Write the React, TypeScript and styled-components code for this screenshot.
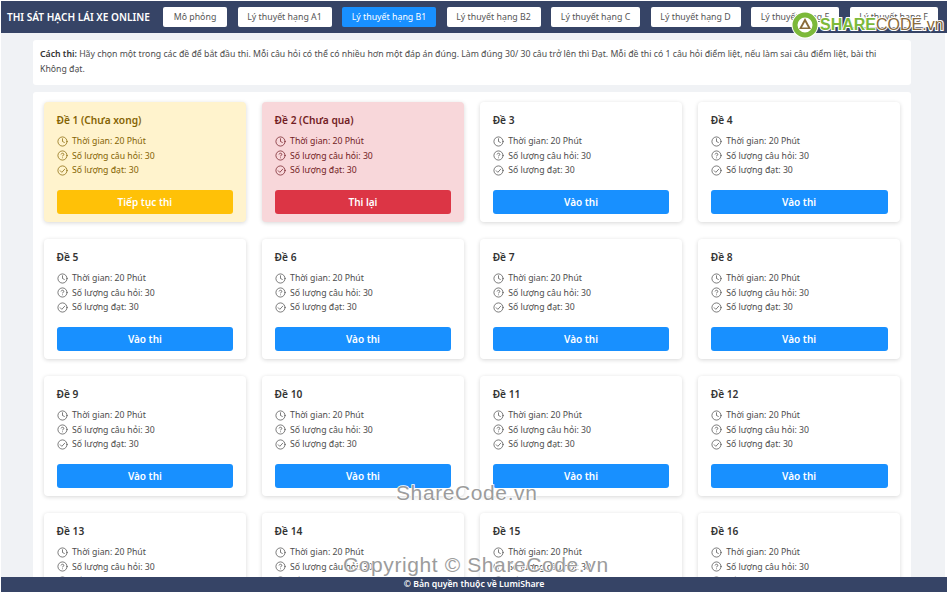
import React from "react"
import styled, { createGlobalStyle } from "styled-components"
import { CircleHelp, Clock } from "lucide-react"

type Tone = "default" | "warning" | "danger"

const tones = {
  default: { bg: "#fff", text: "#4d4d4d", title: "#333", button: "#1890ff" },
  warning: { bg: "#fff3cd", text: "#856404", title: "#856404", button: "#ffc107" },
  danger: { bg: "#f8d7da", text: "#721c24", title: "#721c24", button: "#dc3545" },
}

const GlobalStyle = createGlobalStyle`
  html, body {
    margin: 0;
    height: 100%;
    overflow: hidden;
    background: #fff;
  }
  body {
    font-family: "Noto Sans", "Open Sans", sans-serif;
  }
`

const Shell = styled.div`
  position: relative;
  display: flex;
  flex-direction: column;
  box-sizing: border-box;
  height: 594px;
  padding: 1px 3px 2px 1px;
`

const Header = styled.header`
  display: flex;
  flex: none;
  align-items: center;
  height: 32px;
  padding-left: 6px;
  background: #364466;
  overflow: hidden;
`

const Brand = styled.div`
  width: 156px;
  flex: none;
  color: #fff;
  font-size: 10.1px;
  font-weight: 600;
  white-space: nowrap;
`

const Nav = styled.nav`
  display: flex;
  gap: 10.5px;
`

const NavButton = styled.button<{ $active?: boolean; $w: number }>`
  flex: none;
  height: 20px;
  padding: 0;
  width: ${(p) => p.$w}px;
  border: 0;
  border-radius: 2px;
  background: ${(p) => (p.$active ? "#1890ff" : "#fff")};
  color: ${(p) => (p.$active ? "#fff" : "#555")};
  font-family: inherit;
  font-size: 8.8px;
  white-space: nowrap;
`

const Main = styled.main`
  flex: 1;
  min-height: 0;
  overflow: hidden;
  padding: 7px 34px 0 32px;
  margin-right: 2px;
  background: #f0f2f5;
`

const Notice = styled.div`
  box-sizing: border-box;
  height: 45px;
  padding: 7px;
  margin-bottom: 7px;
  border-radius: 3px;
  background: #fff;
  color: #4d4d4d;
  font-size: 8.72px;
  line-height: 15px;
  b {
    color: #333;
    font-weight: 600;
  }
`

const Panel = styled.section`
  display: grid;
  grid-template-columns: repeat(4, 1fr);
  gap: 17px 16.3px;
  padding: 10px 11px;
  border-radius: 3px;
  background: #fff;
`

const Card = styled.article<{ $tone: Tone }>`
  box-sizing: border-box;
  height: 120px;
  padding: 10px 12.5px 8px;
  border-radius: 4px;
  background: ${(p) => tones[p.$tone].bg};
  color: ${(p) => tones[p.$tone].text};
  box-shadow: 0 1px 4px rgba(0, 0, 0, 0.16);
`

const CardTitle = styled.h3<{ $tone: Tone }>`
  margin: 0 0 6px;
  color: ${(p) => tones[p.$tone].title};
  font-size: 10.2px;
  font-weight: 600;
  line-height: 16px;
`

const Stat = styled.div`
  display: flex;
  align-items: center;
  gap: 4.5px;
  height: 14.5px;
  font-size: 8.7px;
  white-space: nowrap;
`

const CardButton = styled.button<{ $tone: Tone }>`
  display: block;
  width: 100%;
  height: 24px;
  margin-top: 12px;
  border: 0;
  border-radius: 3px;
  background: ${(p) => tones[p.$tone].button};
  color: #fff;
  font-family: inherit;
  font-size: 10px;
  font-weight: 600;
`

const Footer = styled.footer`
  flex: none;
  height: 15px;
  background: #364466;
  color: #fff;
  font-size: 8.7px;
  font-weight: 600;
  line-height: 15px;
  text-align: center;
`

const LogoMark = styled.div`
  position: absolute;
  top: 11px;
  left: 790px;
  display: flex;
  align-items: center;
  font-family: "Liberation Sans", sans-serif;
  font-size: 16px;
  line-height: 28px;
  white-space: nowrap;
  svg {
    flex: none;
  }
`

const LogoWord = styled.span<{ $bold?: boolean; $color: string }>`
  color: ${(p) => p.$color};
  font-weight: ${(p) => (p.$bold ? 700 : 400)};
  -webkit-text-stroke: 2px #fff;
  paint-order: stroke fill;
`

const Watermark = styled.div<{ $top: number; $left: number }>`
  position: absolute;
  top: ${(p) => p.$top}px;
  left: ${(p) => p.$left}px;
  color: #9c9c9c;
  font-family: "Liberation Sans", sans-serif;
  font-size: 21px;
  letter-spacing: 0.6px;
  white-space: nowrap;
  -webkit-text-stroke: 1.5px #fff;
  paint-order: stroke fill;
`

const navItems = [
  { label: "Mô phỏng", w: 64 },
  { label: "Lý thuyết hạng A1", w: 94 },
  { label: "Lý thuyết hạng B1", w: 94, active: true },
  { label: "Lý thuyết hạng B2", w: 94 },
  { label: "Lý thuyết hạng C", w: 89 },
  { label: "Lý thuyết hạng D", w: 90 },
  { label: "Lý thuyết hạng E", w: 88 },
  { label: "Lý thuyết hạng F", w: 88 },
]

function examInfo(n: number): { title: string; action: string; tone: Tone } {
  if (n === 1) return { title: "Đề 1 (Chưa xong)", action: "Tiếp tục thi", tone: "warning" }
  if (n === 2) return { title: "Đề 2 (Chưa qua)", action: "Thi lại", tone: "danger" }
  return { title: `Đề ${n}`, action: "Vào thi", tone: "default" }
}

// lucide's tick is too small at this size, so this one is drawn wider
function CheckCircle() {
  return (
    <svg width="11" height="11" viewBox="0 0 24 24" fill="none" stroke="currentColor" strokeWidth="1.6" strokeLinecap="round" strokeLinejoin="round">
      <circle cx="12" cy="12" r="10" />
      <path d="M7 12.5l3.5 3.5 6.5-7" />
    </svg>
  )
}

function ExamCard({ n }: { n: number }) {
  const { title, action, tone } = examInfo(n)
  return (
    <Card $tone={tone}>
      <CardTitle $tone={tone}>{title}</CardTitle>
      <Stat>
        <Clock size={11} strokeWidth={1.6} />
        Thời gian: 20 Phút
      </Stat>
      <Stat>
        <CircleHelp size={11} strokeWidth={1.6} />
        Số lượng câu hỏi: 30
      </Stat>
      <Stat>
        <CheckCircle />
        Số lượng đạt: 30
      </Stat>
      <CardButton $tone={tone}>{action}</CardButton>
    </Card>
  )
}

function Logo() {
  return (
    <LogoMark>
      <svg width="30" height="28" viewBox="0 0 30 28">
        <circle cx="15" cy="14" r="13.5" fill="#fff" />
        <circle cx="15" cy="14" r="10" fill="none" stroke="#7cb93a" strokeWidth="5" />
        <path d="M15 7l6 11H9z" fill="#8a6a3a" />
        <path d="M15 11l3 5.5h-6z" fill="#fff" />
      </svg>
      <LogoWord $bold $color="#7cb93a">SHARE</LogoWord>
      <LogoWord $color="#8a6a3a">CODE.vn</LogoWord>
    </LogoMark>
  )
}

export default function App() {
  return (
    <Shell>
      <GlobalStyle />
      <Header>
        <Brand>THI SÁT HẠCH LÁI XE ONLINE</Brand>
        <Nav>
          {navItems.map((item) => (
            <NavButton key={item.label} $active={item.active} $w={item.w}>
              {item.label}
            </NavButton>
          ))}
        </Nav>
      </Header>
      <Main>
        <Notice>
          <b>Cách thi:</b> Hãy chọn một trong các đề để bắt đầu thi. Mỗi câu hỏi có thể có nhiều hơn một đáp án đúng. Làm đúng 30/ 30 câu trở lên thì Đạt. Mỗi đề thi có 1 câu hỏi điểm liệt, nếu làm sai câu điểm liệt, bài thi Không đạt.
        </Notice>
        <Panel>
          {Array.from({ length: 16 }, (_, i) => (
            <ExamCard key={i} n={i + 1} />
          ))}
        </Panel>
      </Main>
      <Footer>© Bản quyền thuộc về LumiShare</Footer>
      <Logo />
      <Watermark $top={481} $left={396}>ShareCode.vn</Watermark>
      <Watermark $top={553} $left={343}>Copyright © ShareCode.vn</Watermark>
    </Shell>
  )
}
